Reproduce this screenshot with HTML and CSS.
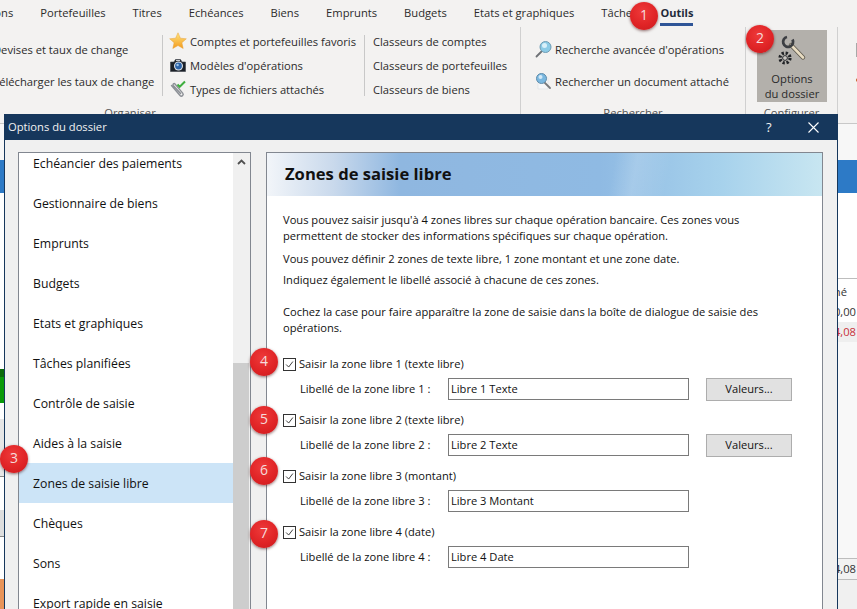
FILE: index.html
```html
<!DOCTYPE html>
<html lang="fr">
<head>
<meta charset="utf-8">
<title>Options du dossier</title>
<link rel="stylesheet" href="styles.css">
</head>
<body>
<div class="app">
  <nav class="tabs">
    <span>Options</span><span>Portefeuilles</span><span>Titres</span><span>Echéances</span><span>Biens</span><span>Emprunts</span><span>Budgets</span><span>Etats et graphiques</span><span>Tâches</span><span class="tab-on">Outils</span>
  </nav>
  <div class="ribbon">
    <section class="group group-org">
      <div class="group-body">
        <div class="col col-a">
          <div class="cmd">Devises et taux de change</div>
          <div class="cmd">Télécharger les taux de change</div>
        </div>
        <div class="col col-b">
          <div class="cmd"><svg class="ico" viewBox="0 0 18 18"><defs><linearGradient id="st" x1="0" y1="0" x2="0" y2="1"><stop offset="0" stop-color="#ffe680"/><stop offset="1" stop-color="#f39a1c"/></linearGradient></defs><path d="M9 .8l2.400 5.400 5.900.6-4.400 3.900 1.300 5.800L9 13.500l-5.200 3 1.300-5.800L.7 6.800l5.900-.6z" fill="url(#st)" stroke="#e8a33a" stroke-width=".5"/></svg>Comptes et portefeuilles favoris</div>
          <div class="cmd"><svg class="ico" viewBox="0 0 18 18"><path d="M1.500 6h3.500l1.500-2.500h5l1.500 2.500h3.500v9.500h-15z" fill="#1a2028" stroke="#3b4048" stroke-width=".6"/><path d="M7 4h4v1H7z" fill="#c9ccd2"/><circle cx="9.500" cy="10" r="4.500" fill="#dfe3e8"/><circle cx="9.500" cy="10" r="3.400" fill="#2b63a8"/><circle cx="8.600" cy="9" r="1.200" fill="#9cc3ea"/></svg>Modèles d'opérations</div>
          <div class="cmd"><svg class="ico" viewBox="0 0 18 18"><path d="M2.500 5.500l8.500 10c1.600 1.700 4.300-.5 2.700-2.400L6 4C5 2.900 3.300 4.200 4.300 5.500l7.300 8" fill="none" stroke="#8c9096" stroke-width="1.400" stroke-linecap="round"/><path d="M8.500 4.500l2.200 2.300L16 1.500" fill="none" stroke="#3fae3f" stroke-width="2"/></svg>Types de fichiers attachés</div>
        </div>
        <div class="col col-c">
          <div class="cmd">Classeurs de comptes</div>
          <div class="cmd">Classeurs de portefeuilles</div>
          <div class="cmd">Classeurs de biens</div>
        </div>
      </div>
      <div class="group-label">Organiser</div>
    </section>
    <section class="group group-search">
      <div class="group-body">
        <div class="col col-s">
          <div class="cmd"><svg class="ico" viewBox="0 0 18 18"><path d="M1.500 16.500l5-5" stroke="#6f7276" stroke-width="1.800" stroke-linecap="round"/><circle cx="10.500" cy="7" r="5.500" fill="#8ccbe6" stroke="#6f9cb4"/><circle cx="9.500" cy="5.500" r="2.500" fill="#d9f0f9"/></svg>Recherche avancée d'opérations</div>
          <div class="cmd"><svg class="ico" viewBox="0 0 18 18"><path d="M3 6h10v11H3z" fill="#f6f7f8" stroke="#dcdfe3" stroke-width=".6"/><path d="M9 10l6 6" stroke="#77797c" stroke-width="1.800" stroke-linecap="round"/><circle cx="6.500" cy="6.500" r="5" fill="#7ab8e0" stroke="#5e8cab"/><circle cx="5.500" cy="5" r="2" fill="#d3e9f7"/></svg>Rechercher un document attaché</div>
        </div>
      </div>
      <div class="group-label">Rechercher</div>
    </section>
    <section class="group group-config">
      <div class="group-body">
        <div class="big-btn">
          <svg class="big-ico" viewBox="0 0 36 34"><path d="M17 12l12 12.500" stroke="#5f5a4e" stroke-width="4.400" stroke-linecap="round"/><path d="M17 12l12 12.500" stroke="#e8dcc2" stroke-width="2.600" stroke-linecap="round"/><path d="M18.500 6.500A5 5 0 1 1 13 4" fill="none" stroke="#3c3e42" stroke-width="2.800"/><circle cx="11" cy="25" r="5" fill="none" stroke="#222427" stroke-width="3.200" stroke-dasharray="2.200 1.730"/><circle cx="11" cy="25" r="2.400" fill="#c9c6c1" stroke="#2a2c2f" stroke-width="1"/></svg>
          <span>Options</span>
          <span>du dossier</span>
        </div>
      </div>
      <div class="group-label">Configurer</div>
    </section>
    <section class="group group-next">
      <div class="next-ico"></div>
      <div class="next-dot"></div>
    </section>
  </div>
  <main class="backdrop">
    <div class="strip strip-l">
      <i class="bk bk-blank1"></i><i class="bk bk-blue"></i><i class="bk bk-white1"></i><i class="bk bk-dgreen"></i><i class="bk bk-green"></i><i class="bk bk-white2"></i><i class="bk bk-grey1"></i><i class="bk bk-white3"></i><i class="bk bk-grey2"></i><i class="bk bk-white4"></i><i class="bk bk-orange"></i>
    </div>
    <div class="strip strip-r">
      <i class="bk bk-blank1"></i><i class="bk bk-blue"></i><i class="bk bk-white5"></i>
      <div class="cell cell-head">né</div>
      <div class="cell">0,00</div>
      <div class="cell cell-red">4,08</div>
      <i class="bk bk-white6"></i>
      <div class="cell cell-foot">4,08</div>
      <i class="bk bk-end"></i>
    </div>
  </main>
</div>

<div class="dialog">
  <header class="titlebar">
    <span class="title">Options du dossier</span>
    <span class="help">?</span>
    <svg class="close" viewBox="0 0 11 11"><path d="M.5.500l10 10M10.500.500l-10 10" stroke="#fff" stroke-width="1.100"/></svg>
  </header>
  <div class="dlg-body">
    <div class="list">
      <ul class="items">
        <li>Echéancier des paiements</li>
        <li>Gestionnaire de biens</li>
        <li>Emprunts</li>
        <li>Budgets</li>
        <li>Etats et graphiques</li>
        <li>Tâches planifiées</li>
        <li>Contrôle de saisie</li>
        <li>Aides à la saisie</li>
        <li class="sel">Zones de saisie libre</li>
        <li>Chèques</li>
        <li>Sons</li>
        <li>Export rapide en saisie</li>
      </ul>
      <div class="scroll">
        <svg class="up" viewBox="0 0 9 6"><path d="M1 5l3.500-3.500L8 5" fill="none" stroke="#505050" stroke-width="1.800"/></svg>
        <div class="thumb"></div>
      </div>
    </div>
    <div class="panel">
      <div class="banner"><h1>Zones de saisie libre</h1></div>
      <div class="content">
        <p class="p1">Vous pouvez saisir jusqu'à 4 zones libres sur chaque opération bancaire. Ces zones vous<br>permettent de stocker des informations spécifiques sur chaque opération.</p>
        <p class="p2">Vous pouvez définir 2 zones de texte libre, 1 zone montant et une zone date.</p>
        <p class="p3">Indiquez également le libellé associé à chacune de ces zones.</p>
        <p class="p4">Cochez la case pour faire apparaître la zone de saisie dans la boîte de dialogue de saisie des<br>opérations.</p>
        <div class="zones">
          <div class="zone">
            <label class="check"><span class="box"><svg viewBox="0 0 13 13"><path d="M2.500 6.500l3 3 5-6.500" fill="none" stroke="#333" stroke-width="1.100"/></svg></span>Saisir la zone libre 1 (texte libre)</label>
            <div class="field"><span class="lab">Libellé de la zone libre 1 :</span><span class="input">Libre 1 Texte</span><span class="btn">Valeurs...</span></div>
          </div>
          <div class="zone">
            <label class="check"><span class="box"><svg viewBox="0 0 13 13"><path d="M2.500 6.500l3 3 5-6.500" fill="none" stroke="#333" stroke-width="1.100"/></svg></span>Saisir la zone libre 2 (texte libre)</label>
            <div class="field"><span class="lab">Libellé de la zone libre 2 :</span><span class="input">Libre 2 Texte</span><span class="btn">Valeurs...</span></div>
          </div>
          <div class="zone">
            <label class="check"><span class="box"><svg viewBox="0 0 13 13"><path d="M2.500 6.500l3 3 5-6.500" fill="none" stroke="#333" stroke-width="1.100"/></svg></span>Saisir la zone libre 3 (montant)</label>
            <div class="field"><span class="lab">Libellé de la zone libre 3 :</span><span class="input">Libre 3 Montant</span></div>
          </div>
          <div class="zone">
            <label class="check"><span class="box"><svg viewBox="0 0 13 13"><path d="M2.500 6.500l3 3 5-6.500" fill="none" stroke="#333" stroke-width="1.100"/></svg></span>Saisir la zone libre 4 (date)</label>
            <div class="field"><span class="lab">Libellé de la zone libre 4 :</span><span class="input">Libre 4 Date</span></div>
          </div>
        </div>
      </div>
    </div>
  </div>
</div>

<span class="pin pin-1">1</span>
<span class="pin pin-2">2</span>
<span class="pin pin-3">3</span>
<span class="pin pin-4">4</span>
<span class="pin pin-5">5</span>
<span class="pin pin-6">6</span>
<span class="pin pin-7">7</span>
</body>
</html>
```
FILE: styles.css
```css
* { box-sizing: border-box; }
html, body { margin: 0; padding: 0; }
body {
  width: 857px;
  height: 609px;
  overflow: hidden;
  position: relative;
  background: #f0f0f0;
  font-family: "Open Sans", "Noto Sans", sans-serif;
  font-size: 11.2px;
  color: #1c1c1c;
}
.app { width: 857px; height: 609px; display: flex; flex-direction: column; overflow: hidden; }

/* tabs */
.tabs {
  height: 27px;
  flex: none;
  display: flex;
  gap: 27px;
  margin-left: -28px;
  padding-top: 5px;
  line-height: 16px;
  white-space: nowrap;
  background: #f3f2f1;
  color: #2b2b2b;
}
.tab-on {
  font-weight: 700;
  font-size: 11px;
  color: #1f2a3a;
  height: 21px;
  border-bottom: 3px solid #2f5597;
  margin-left: -4px;
}

/* ribbon */
.ribbon {
  height: 97px;
  flex: none;
  display: flex;
  background: #f3f2f1;
  border-bottom: 1px solid #c8c8c8;
  color: #2b2b2b;
  margin-left: -260px;
  white-space: nowrap;
}
.group { display: flex; flex-direction: column; border-right: 1px solid #d0d0d0; height: 87px; flex: none; }
.group-org { width: 781px; padding-left: 253px; }
.group-search { width: 225px; }
.group-config { width: 92px; }
.group-next { border-right: 0; width: 40px; padding: 16px 0 0 18px; }
.group-body { height: 77px; flex: none; display: flex; }
.group-label { height: 17px; flex: none; line-height: 17px; text-align: center; color: #555; }
.group-org .group-label { margin-left: -253px; }
.col { display: flex; flex-direction: column; flex: none; }
.cmd { display: flex; align-items: center; gap: 3px; height: 24px; flex: none; }
.col-a { width: 170px; height: 61px; margin-top: 8px; padding-top: 2px; border-right: 1px solid #c8c8c8; }
.col-a .cmd + .cmd { margin-top: 8px; }
.col-b { width: 202px; height: 61px; margin-top: 8px; padding-left: 6px; border-right: 1px solid #c8c8c8; }
.col-b .cmd:first-child, .col-c .cmd:first-child { margin-top: -6px; }
.col-c { padding-left: 8px; margin-top: 8px; height: 61px; }
.col-s { padding-left: 14px; margin-top: 10px; }
.col-s .cmd { gap: 2px; }
.col-s .cmd + .cmd { margin-top: 8px; }
.ico { width: 18px; height: 18px; flex: none; }
.big-btn {
  width: 70px;
  height: 72px;
  margin: 3px 0 0 11px;
  background: #b3b0ab;
  display: flex;
  flex-direction: column;
  align-items: center;
  line-height: 15px;
  color: #2a2a2a;
}
.big-ico { width: 36px; height: 34px; margin: 3px 0 4px; flex: none; }
.next-ico { width: 8px; height: 14px; background: #a8a8a8; flex: none; }
.next-dot { width: 4px; height: 4px; margin-top: 21px; border-radius: 50%; background: #c8602a; flex: none; }

/* backdrop */
.backdrop { flex: 1; display: flex; justify-content: space-between; min-height: 0; background: #f0f0f0; }
.strip { display: flex; flex-direction: column; flex: none; overflow: hidden; }
.strip-l { width: 5px; }
.strip-r { width: 20px; }
.bk { display: block; flex: none; }
.bk-blank1 { height: 36px; background: #f7f7f7; }
.bk-blue { height: 33px; background: #2d7ac6; }
.bk-white1 { height: 176px; background: #fff; }
.bk-dgreen { height: 8px; background: #0b6a0b; }
.bk-green { height: 26px; background: #0a9a0a; }
.bk-white2 { height: 16px; background: #fff; }
.bk-grey1 { height: 58px; background: #e6e6e6; border-bottom: 1px solid #888; }
.bk-white3 { height: 33px; background: #fff; }
.bk-grey2 { height: 27px; background: #dedede; border-bottom: 1px solid #888; }
.bk-white4 { height: 42px; background: #fff; }
.bk-orange { height: 30px; background: #e8945a; }
.bk-white5 { height: 86px; background: #fff; border-bottom: 1px solid #bdbdbd; }
.bk-white6 { height: 216px; background: #f8f8f8; }
.bk-end { flex: 1; background: #f0f0f0; }
.cell { height: 20px; flex: none; background: #fff; text-align: right; padding-right: 1px; line-height: 20px; white-space: nowrap; margin-left: -4px; color: #333; }
.cell-head { height: 23px; line-height: 26px; padding-right: 10px; }
.cell-red { background: #efefef; color: #c8303a; }
.cell-foot { height: 22px; background: #f2f2f2; border-top: 1px solid #bdbdbd; border-bottom: 1px solid #bdbdbd; }

/* dialog */
.dialog {
  position: absolute;
  left: 4px;
  top: 114px;
  width: 834px;
  height: 520px;
  background: #f0f0f0;
  border: 1px solid #16375c;
  border-top: 0;
}
.titlebar {
  height: 26px;
  background: #16375c;
  color: #f2f2f2;
  display: flex;
  align-items: center;
  padding-left: 4px;
  margin-left: -1px;
  margin-right: -1px;
  line-height: 16px;
}
.title { flex: 1; }
.help { width: 11px; margin-right: 31px; font-size: 13px; }
.close { width: 11px; height: 11px; margin-right: 19px; }
.dlg-body { display: flex; gap: 15px; padding: 12px 0 0 13px; height: 480px; }

.list { width: 233px; height: 480px; flex: none; background: #fff; border: 1px solid #828790; display: flex; overflow: hidden; }
.items { list-style: none; margin: -10px 0 0; padding: 0; width: 214px; flex: none; }
.items li { height: 40px; line-height: 42px; padding-left: 14px; font-size: 12.25px; color: #111; }
.items li.sel { background: #cce4f7; }
.scroll { flex: 1; background: #f0f0f0; position: relative; padding-top: 6px; }
.up { display: block; width: 9px; height: 6px; margin: 0 auto 198px; }
.thumb { height: 300px; width: 16px; background: #cdcdcd; margin-right: 1px; }

.panel { width: 557px; height: 480px; flex: none; background: #fff; border: 1px solid #828790; }
.banner {
  height: 43px;
  background:
    linear-gradient(100deg, transparent 62%, rgba(255,255,255,.16) 66%, transparent 72%),
    linear-gradient(90deg, #f2f5f9 0%, #c9d9ec 12%, #8fb7e0 24%, #8fbae3 60%, #a7d2ec 82%, #c8e6f1 100%);
  padding-left: 18px;
}
.banner h1 { margin: 0; font-size: 16.6px; line-height: 41px; font-weight: 700; color: #111; }
.content { padding: 16px 0 0 16px; font-size: 11.14px; line-height: 16px; color: #111; }
.content p { margin: 0; white-space: nowrap; }
.content .p2 { margin-top: 7px; }
.content .p3 { margin-top: 5px; }
.content .p4 { margin-top: 16px; }
.zones { margin-top: 19px; display: flex; flex-direction: column; }
.zone { height: 56px; flex: none; }
.check { display: flex; align-items: center; height: 16px; gap: 3px; margin-top: 1px; }
.box { width: 13px; height: 13px; flex: none; border: 1px solid #333; background: #fff; display: block; }
.box svg { display: block; width: 11px; height: 11px; }
.field { display: flex; align-items: center; height: 24px; margin-top: 5px; padding-left: 17px; }
.lab { width: 148px; flex: none; }
.input { width: 241px; height: 22px; flex: none; border: 1px solid #7a7a7a; padding-left: 2px; line-height: 20px; }
.btn { width: 86px; height: 23px; margin-left: 17px; flex: none; background: #e1e1e1; border: 1px solid #adadad; text-align: center; line-height: 20px; }

/* numbered pins */
.pin {
  position: absolute;
  width: 28px;
  height: 28px;
  border-radius: 50%;
  background: radial-gradient(circle at 45% 35%, #ee3a3a 0%, #e02426 55%, #c81a1e 100%);
  box-shadow: 0 1px 3px rgba(60,0,0,.55);
  color: #f5dcdc;
  font-size: 14px;
  line-height: 26px;
  text-align: center;
}
.pin-1 { left: 630px; top: 2px; }
.pin-2 { left: 746px; top: 25px; }
.pin-3 { left: 0; top: 445px; }
.pin-4 { left: 250px; top: 348px; }
.pin-5 { left: 250px; top: 406px; }
.pin-6 { left: 250px; top: 457px; }
.pin-7 { left: 250px; top: 520px; }
```
